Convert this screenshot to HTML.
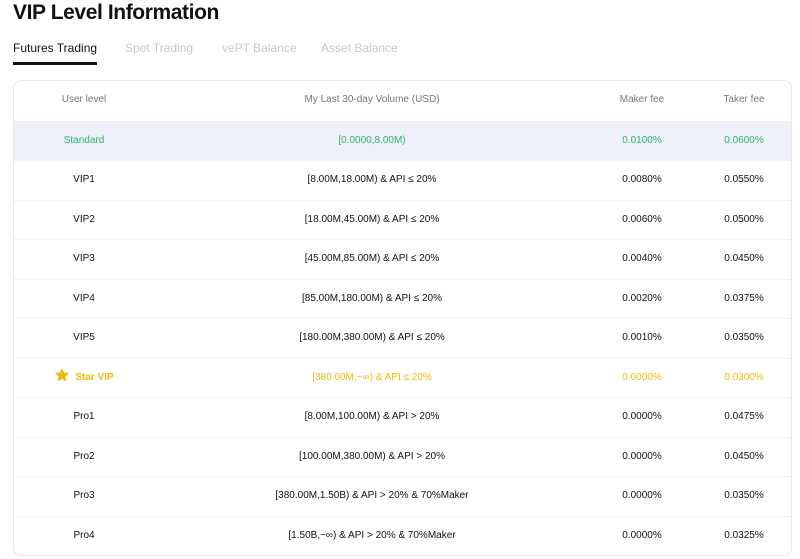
<!DOCTYPE html>
<html><head><meta charset="utf-8"><style>
*{margin:0;padding:0;box-sizing:border-box}
body{width:800px;height:559px;background:#fff;font-family:"Liberation Sans",sans-serif;color:#111;position:relative;overflow:hidden}
h1{position:absolute;left:13px;top:1px;font-size:21px;font-weight:bold;letter-spacing:-0.4px}
.tabs{position:absolute;top:41px;left:13px;font-size:12px}
.tabs span{position:absolute;white-space:nowrap;color:#c8c8c8}
.tabs .a{color:#111}
.ul{position:absolute;left:13px;top:62px;width:84px;height:3px;background:#111}
.tbl{position:absolute;left:13px;top:80px;width:779px;height:476px;border:1px solid #e8e8e8;border-radius:8px;overflow:hidden}
.r{position:absolute;left:0;width:779px;height:39.5px;border-top:1px solid #f0f0f0;font-size:10px;color:#111}
.r div{position:absolute;top:0;line-height:38px;text-align:center;white-space:nowrap}
.c1{left:20px;width:100px}.c2{left:258px;width:200px}.c3{left:578px;width:100px}.c4{left:680px;width:100px}
.h{border-top:none;color:#777}
.std{background:#eef0fa;color:#2fb36a}
.star{color:#f0b90b}
</style></head><body>
<h1>VIP Level Information</h1>
<div class="tabs"><span class="a" style="left:0">Futures Trading</span><span style="left:112px">Spot Trading</span><span style="left:209px">vePT Balance</span><span style="left:308px">Asset Balance</span></div>
<div class="ul"></div>
<div class="tbl">
<div class="r h" style="top:0"><div class="c1">User level</div><div class="c2">My Last 30-day Volume (USD)</div><div class="c3">Maker fee</div><div class="c4">Taker fee</div></div>
<div class="r std" style="top:39.5px"><div class="c1">Standard</div><div class="c2">[0.0000,8.00M)</div><div class="c3">0.0100%</div><div class="c4">0.0600%</div></div>
<div class="r" style="top:79px"><div class="c1">VIP1</div><div class="c2">[8.00M,18.00M) &amp; API ≤ 20%</div><div class="c3">0.0080%</div><div class="c4">0.0550%</div></div>
<div class="r" style="top:118.5px"><div class="c1">VIP2</div><div class="c2">[18.00M,45.00M) &amp; API ≤ 20%</div><div class="c3">0.0060%</div><div class="c4">0.0500%</div></div>
<div class="r" style="top:158px"><div class="c1">VIP3</div><div class="c2">[45.00M,85.00M) &amp; API ≤ 20%</div><div class="c3">0.0040%</div><div class="c4">0.0450%</div></div>
<div class="r" style="top:197.5px"><div class="c1">VIP4</div><div class="c2">[85.00M,180.00M) &amp; API ≤ 20%</div><div class="c3">0.0020%</div><div class="c4">0.0375%</div></div>
<div class="r" style="top:237px"><div class="c1">VIP5</div><div class="c2">[180.00M,380.00M) &amp; API ≤ 20%</div><div class="c3">0.0010%</div><div class="c4">0.0350%</div></div>
<div class="r star" style="top:276.5px"><div class="c1" style="font-weight:bold"><svg width="16" height="16" viewBox="0 0 24 24" style="vertical-align:-3px;margin-right:5px"><path fill="#f0b90b" d="M12 1.5l3.2 6.8 7.3.9-5.4 5 1.4 7.3L12 17.9l-6.5 3.6 1.4-7.3-5.4-5 7.3-.9z"/></svg>Star VIP</div><div class="c2">[380.00M,~∞) &amp; API ≤ 20%</div><div class="c3">0.0000%</div><div class="c4">0.0300%</div></div>
<div class="r" style="top:316px"><div class="c1">Pro1</div><div class="c2">[8.00M,100.00M) &amp; API &gt; 20%</div><div class="c3">0.0000%</div><div class="c4">0.0475%</div></div>
<div class="r" style="top:355.5px"><div class="c1">Pro2</div><div class="c2">[100.00M,380.00M) &amp; API &gt; 20%</div><div class="c3">0.0000%</div><div class="c4">0.0450%</div></div>
<div class="r" style="top:395px"><div class="c1">Pro3</div><div class="c2">[380.00M,1.50B) &amp; API &gt; 20% &amp; 70%Maker</div><div class="c3">0.0000%</div><div class="c4">0.0350%</div></div>
<div class="r" style="top:434.5px"><div class="c1">Pro4</div><div class="c2">[1.50B,~∞) &amp; API &gt; 20% &amp; 70%Maker</div><div class="c3">0.0000%</div><div class="c4">0.0325%</div></div>
</div>
</body></html>
